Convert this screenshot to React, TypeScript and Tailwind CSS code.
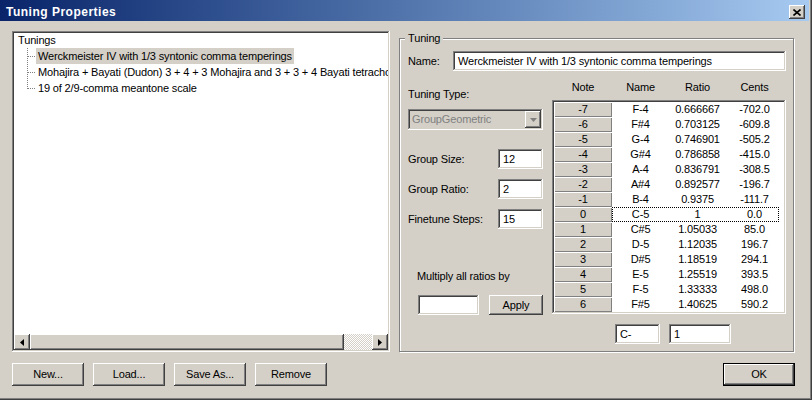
import React from 'react';

const raised =
  'shadow-[inset_-1px_-1px_#404040,inset_1px_1px_#ffffff,inset_-2px_-2px_#808080,inset_2px_2px_#d4d0c8]';
const sunken =
  'shadow-[inset_-1px_-1px_#ffffff,inset_1px_1px_#808080,inset_-2px_-2px_#d4d0c8,inset_2px_2px_#404040]';

const rows = [
  ['-7', 'F-4', '0.666667', '-702.0'],
  ['-6', 'F#4', '0.703125', '-609.8'],
  ['-5', 'G-4', '0.746901', '-505.2'],
  ['-4', 'G#4', '0.786858', '-415.0'],
  ['-3', 'A-4', '0.836791', '-308.5'],
  ['-2', 'A#4', '0.892577', '-196.7'],
  ['-1', 'B-4', '0.9375', '-111.7'],
  ['0', 'C-5', '1', '0.0'],
  ['1', 'C#5', '1.05033', '85.0'],
  ['2', 'D-5', '1.12035', '196.7'],
  ['3', 'D#5', '1.18519', '294.1'],
  ['4', 'E-5', '1.25519', '393.5'],
  ['5', 'F-5', '1.33333', '498.0'],
  ['6', 'F#5', '1.40625', '590.2'],
];

const tunings = [
  'Werckmeister IV with 1/3 syntonic comma temperings',
  'Mohajira + Bayati (Dudon) 3 + 4 + 3 Mohajira and 3 + 3 + 4 Bayati tetrachords',
  '19 of 2/9-comma meantone scale',
];

const Field: React.FC<{ value: string; className?: string }> = ({ value, className = '' }) => (
  <div className={`h-[20px] bg-white ${sunken} pl-[5px] flex items-center ${className}`}>{value}</div>
);

const Button: React.FC<{ label: string; className?: string }> = ({ label, className = '' }) => (
  <div className={`h-[23px] w-[72px] bg-[#d4d0c8] ${raised} flex items-center justify-center ${className}`}>
    {label}
  </div>
);

const TreeLines: React.FC<{ last: boolean }> = ({ last }) => (
  <svg width="22" height="16" className="shrink-0">
    <line x1="13.5" y1="0" x2="13.5" y2={last ? 9 : 16} stroke="#808080" strokeDasharray="1 1" />
    <line x1="14" y1="8.5" x2="22" y2="8.5" stroke="#808080" strokeDasharray="1 1" />
  </svg>
);

const Arrow: React.FC<{ dir: 'left' | 'right' | 'down'; color?: string }> = ({ dir, color = '#000' }) => {
  if (dir === 'down')
    return (
      <svg width="7" height="4">
        <path d="M0 0h7L3.5 4z" fill={color} />
      </svg>
    );
  return (
    <svg width="4" height="7">
      <path d={dir === 'left' ? 'M4 0v7L0 3.5z' : 'M0 0v7L4 3.5z'} fill={color} />
    </svg>
  );
};

export default function App() {
  return (
    <div className="w-[812px] h-[400px] bg-[#d4d0c8] pr-[3px] flex flex-col font-['Liberation_Sans',Arial,sans-serif] text-[11px] tracking-[-0.15px] text-black shadow-[inset_-1px_-1px_#404040,inset_-2px_-2px_#808080]">
      {/* title bar */}
      <div className="h-[21px] shrink-0 flex items-center bg-linear-to-r from-[#0a246a] to-[#a6caf0]">
        <span className="pl-[6px] pt-[2px] font-bold text-[12px] tracking-[0.5px] text-white">Tuning Properties</span>
        <div className={`ml-auto mr-[4px] self-end mb-[2px] w-[16px] h-[14px] bg-[#d4d0c8] ${raised} flex items-center justify-center`}>
          <svg width="8" height="7">
            <path d="M0.5 0.5l7 6M7.5 0.5l-7 6" stroke="#000" strokeWidth="1.6" />
          </svg>
        </div>
      </div>

      <div className="flex-1 pl-[12px] pr-[14px] pt-[10px] flex flex-col">
        <div className="flex items-start">
          {/* tree */}
          <div className={`w-[378px] h-[321px] bg-white ${sunken} p-[2px] flex flex-col`}>
            <div className="flex-1 overflow-hidden whitespace-nowrap">
              <div className="h-[15px] pl-[4px] flex items-center">Tunings</div>
              {tunings.map((t, i) => (
                <div key={t} className="h-[16px] flex items-center">
                  <TreeLines last={i === tunings.length - 1} />
                  <span className={`px-[2px] h-[16px] leading-[16px] ${i === 0 ? 'bg-[#d4d0c8]' : ''}`}>{t}</span>
                </div>
              ))}
            </div>
            <div className="h-[16px] flex">
              <div className={`w-[16px] bg-[#d4d0c8] ${raised} flex items-center justify-center`}>
                <Arrow dir="left" />
              </div>
              <div className={`w-[314px] bg-[#d4d0c8] ${raised}`} />
              <div className="flex-1 bg-[repeating-conic-gradient(#d4d0c8_0_25%,#ffffff_0_50%)] bg-size-[2px_2px]" />
              <div className={`w-[16px] bg-[#d4d0c8] ${raised} flex items-center justify-center`}>
                <Arrow dir="right" />
              </div>
            </div>
          </div>

          {/* tuning group */}
          <div className="relative ml-[9px] mt-[7px] w-[395px] h-[314px] border border-[#808080] shadow-[1px_1px_0_#ffffff,inset_1px_1px_0_#ffffff] pl-[8px] pt-[12px]">
            <span className="absolute -top-[8px] left-[5px] bg-[#d4d0c8] px-[3px] leading-[14px]">Tuning</span>

            <div className="flex items-center h-[20px]">
              <span className="w-[45px]">Name:</span>
              <Field value={tunings[0]} className="w-[333px]" />
            </div>

            <div className="flex mt-[8px]">
              {/* left column */}
              <div className="w-[135px] flex flex-col">
                <div className="mt-[8px] h-[14px] leading-[14px]">Tuning Type:</div>
                <div className={`mt-[8px] h-[21px] bg-[#d4d0c8] ${sunken} flex items-center pl-[4px] pr-[2px]`}>
                  <span className="text-[#808080]">GroupGeometric</span>
                  <div className={`ml-auto w-[16px] h-[17px] bg-[#d4d0c8] ${raised} flex items-center justify-center`}>
                    <Arrow dir="down" color="#808080" />
                  </div>
                </div>
                <div className="mt-[19px] flex items-center justify-between">
                  <span>Group Size:</span>
                  <Field value="12" className="w-[45px]" />
                </div>
                <div className="mt-[10px] flex items-center justify-between">
                  <span>Group Ratio:</span>
                  <Field value="2" className="w-[45px]" />
                </div>
                <div className="mt-[10px] flex items-center justify-between">
                  <span>Finetune Steps:</span>
                  <Field value="15" className="w-[45px]" />
                </div>
                <div className="mt-[40px] h-[14px] leading-[14px] pl-[9px]">Multiply all ratios by</div>
                <div className="mt-[12px] flex">
                  <Field value="" className="ml-[10px] w-[61px]" />
                  <div className={`ml-[10px] w-[54px] h-[20px] bg-[#d4d0c8] ${raised} flex items-center justify-center`}>
                    Apply
                  </div>
                </div>
              </div>

              {/* right column */}
              <div className="ml-[9px] w-[234px] flex flex-col">
                <div className="h-[16px] pl-[2px] flex items-center">
                  <span className="w-[58px] text-center">Note</span>
                  <span className="w-[57px] text-center">Name</span>
                  <span className="w-[57px] text-center">Ratio</span>
                  <span className="w-[57px] text-center">Cents</span>
                </div>
                <div className={`mt-[5px] h-[214px] bg-white ${sunken} p-[2px]`}>
                  {rows.map(([note, name, ratio, cents]) => (
                    <div key={note} className="h-[15px] flex">
                      <div className="w-[58px] bg-[#d4d0c8] shadow-[inset_1px_1px_#ffffff,inset_-1px_-1px_#808080] flex items-center justify-center">
                        {note}
                      </div>
                      <div className="relative w-[171px] flex items-center">
                        {note === '0' && (
                          <div className="absolute left-0 right-[4px] inset-y-0 border border-dotted border-black" />
                        )}
                        <span className="w-[57px] text-center">{name}</span>
                        <span className="w-[57px] text-center">{ratio}</span>
                        <span className="w-[57px] text-center">{cents}</span>
                      </div>
                    </div>
                  ))}
                </div>
                <div className="mt-[10px] pl-[63px] flex">
                  <Field value="C-" className="w-[45px]" />
                  <Field value="1" className="ml-[9px] w-[62px]" />
                </div>
              </div>
            </div>
          </div>
        </div>

        {/* bottom buttons */}
        <div className="mt-[11px] flex gap-[9px]">
          <Button label="New..." />
          <Button label="Load..." />
          <Button label="Save As..." />
          <Button label="Remove" />
          <div className={`ml-auto h-[23px] w-[72px] border border-black bg-[#d4d0c8] ${raised} flex items-center justify-center`}>
            OK
          </div>
        </div>
      </div>
    </div>
  );
}
